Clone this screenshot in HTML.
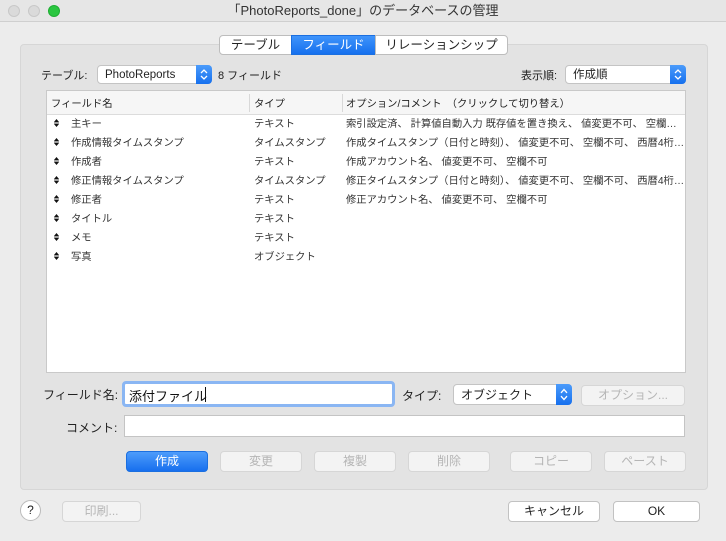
<!DOCTYPE html>
<html><head><meta charset="utf-8"><style>
*{margin:0;padding:0;box-sizing:border-box}
body{width:726px;height:541px;background:#ececec;font-family:"Liberation Sans","Noto Sans CJK JP",sans-serif;font-size:11px;color:#222;position:relative;overflow:hidden}
.a{position:absolute}
.title{left:0;top:0;width:726px;height:22px;background:#e6e6e6;border-bottom:1px solid #cfcfcf;text-align:center;line-height:22px;font-size:13px;color:#333}
.dot{width:12px;height:12px;border-radius:50%;top:5px;background:#dadada;border:1px solid #c8c8c8}
.group{left:20px;top:44px;width:688px;height:446px;background:#e3e3e3;border:1px solid #d6d6d6;border-radius:4px}
.seg{top:35px;height:20px;background:#fff;border:1px solid #bdbdbd;text-align:center;line-height:18px;font-size:12.5px;color:#222}
.pop{height:19px;background:#fff;border:1px solid #c4c4c4;border-radius:4px;line-height:19px;padding-left:7px;font-size:11.5px}
.pop span{position:absolute;top:1px;left:7px;line-height:16px}
.pop .ar{position:absolute;right:-1px;top:-1px;width:16px;height:19px;background:linear-gradient(#4b9bfb,#1670ee);border-radius:0 4px 4px 0}
.tbl{left:46px;top:90px;width:640px;height:283px;background:#fff;border:1px solid #c9c9c9;overflow:hidden}
.hdr{left:0;top:0;width:638px;height:24px;background:#f6f6f6;border-bottom:1px solid #dcdcdc}
.row{position:relative;height:19px;line-height:19px;font-size:10.3px;white-space:nowrap;color:#333}
.row .ic{position:absolute;left:7px;top:4px;width:5px;height:8px}
.btn{height:21px;background:#f3f3f3;border:1px solid #d6d6d6;border-radius:4px;text-align:center;line-height:19px;color:#b5b5b5;font-size:12px}
.wbtn{background:#fff;border:1px solid #c2c2c2;color:#222}
.lbl{font-size:12px;color:#222}
</style></head><body>
<svg width="0" height="0" style="position:absolute"><defs><symbol id="ud" viewBox="0 0 5 8"><path d="M0 3L2.5 0L5 3ZM0 5L2.5 8L5 5Z" fill="#111"/><rect x="0" y="3.6" width="5" height="0.8" fill="#111"/></symbol><symbol id="ar" viewBox="0 0 16 19"><path d="M5 8L8 5L11 8M5 11L8 14L11 11" stroke="#fff" stroke-width="1.3" fill="none"/></symbol></defs></svg>
<div class="a title">「PhotoReports_done」のデータベースの管理</div>
<div class="a dot" style="left:8px"></div>
<div class="a dot" style="left:28px"></div>
<div class="a dot" style="left:48px;background:#2ac640;border-color:#1fae33"></div>
<div class="a group"></div>
<div class="a seg" style="left:219px;width:73px;border-radius:4px 0 0 4px">テーブル</div>
<div class="a seg" style="left:291px;width:85px;background:linear-gradient(#3f94fb,#1670ee);color:#fff;border-color:#1b6fe0">フィールド</div>
<div class="a seg" style="left:375px;width:133px;border-radius:0 4px 4px 0">リレーションシップ</div>

<div class="a lbl" style="left:41px;top:67px;font-size:11px">テーブル:</div>
<div class="a pop" style="left:97px;top:65px;width:115px"><span>PhotoReports</span><svg class="ar" viewBox="0 0 16 19"><use href="#ar"/></svg></div>
<div class="a" style="left:218px;top:67px;font-size:11px">8 フィールド</div>
<div class="a" style="left:521px;top:67px;font-size:11px">表示順:</div>
<div class="a pop" style="left:565px;top:65px;width:121px"><span>作成順</span><svg class="ar" viewBox="0 0 16 19"><use href="#ar"/></svg></div>

<div class="a tbl">
<div class="a hdr"></div>
<div class="a" style="left:4px;top:4px;font-size:10.3px">フィールド名</div>
<div class="a" style="left:202px;top:3px;width:1px;height:18px;background:#d8d8d8"></div>
<div class="a" style="left:207px;top:4px;font-size:10.3px">タイプ</div>
<div class="a" style="left:295px;top:3px;width:1px;height:18px;background:#d8d8d8"></div>
<div class="a" style="left:299px;top:4px;font-size:10.3px">オプション/コメント　（クリックして切り替え）</div>
<div class="a" style="left:0;top:24px;width:638px">
<div class="row"><svg class="ic"><use href="#ud"/></svg><span class="a" style="left:24px">主キー</span><span class="a" style="left:207px">テキスト</span><span class="a" style="left:299px">索引設定済、 計算値自動入力 既存値を置き換え、 値変更不可、 空欄…</span></div>
<div class="row"><svg class="ic"><use href="#ud"/></svg><span class="a" style="left:24px">作成情報タイムスタンプ</span><span class="a" style="left:207px">タイムスタンプ</span><span class="a" style="left:299px">作成タイムスタンプ（日付と時刻）、 値変更不可、 空欄不可、 西暦4桁…</span></div>
<div class="row"><svg class="ic"><use href="#ud"/></svg><span class="a" style="left:24px">作成者</span><span class="a" style="left:207px">テキスト</span><span class="a" style="left:299px">作成アカウント名、 値変更不可、 空欄不可</span></div>
<div class="row"><svg class="ic"><use href="#ud"/></svg><span class="a" style="left:24px">修正情報タイムスタンプ</span><span class="a" style="left:207px">タイムスタンプ</span><span class="a" style="left:299px">修正タイムスタンプ（日付と時刻）、 値変更不可、 空欄不可、 西暦4桁…</span></div>
<div class="row"><svg class="ic"><use href="#ud"/></svg><span class="a" style="left:24px">修正者</span><span class="a" style="left:207px">テキスト</span><span class="a" style="left:299px">修正アカウント名、 値変更不可、 空欄不可</span></div>
<div class="row"><svg class="ic"><use href="#ud"/></svg><span class="a" style="left:24px">タイトル</span><span class="a" style="left:207px">テキスト</span></div>
<div class="row"><svg class="ic"><use href="#ud"/></svg><span class="a" style="left:24px">メモ</span><span class="a" style="left:207px">テキスト</span></div>
<div class="row"><svg class="ic"><use href="#ud"/></svg><span class="a" style="left:24px">写真</span><span class="a" style="left:207px">オブジェクト</span></div>
</div>
</div>

<div class="a lbl" style="left:43px;top:386px">フィールド名:</div>
<div class="a" style="left:122px;top:381px;width:273px;height:26px;border:3px solid #8ab6f3;border-radius:4px;background:#fff"><span style="position:absolute;left:4px;top:2px;font-size:13px;color:#111">添付ファイル</span><span style="position:absolute;left:80px;top:3px;width:1px;height:15px;background:#111"></span></div>
<div class="a lbl" style="left:402px;top:387px">タイプ:</div>
<div class="a pop" style="left:453px;top:384px;width:119px;height:21px;font-size:12px"><span style="top:2px">オブジェクト</span><svg class="ar" style="height:21px" viewBox="0 0 16 19" preserveAspectRatio="none"><use href="#ar"/></svg></div>
<div class="a btn" style="left:581px;top:385px;width:104px">オプション...</div>

<div class="a lbl" style="left:66px;top:419px">コメント:</div>
<div class="a" style="left:124px;top:415px;width:561px;height:22px;background:#fff;border:1px solid #c4c4c4"></div>

<div class="a btn" style="left:126px;top:451px;width:82px;background:linear-gradient(#4d9cfb,#176fee);border-color:#1b6fe0;color:#fff">作成</div>
<div class="a btn" style="left:220px;top:451px;width:82px">変更</div>
<div class="a btn" style="left:314px;top:451px;width:82px">複製</div>
<div class="a btn" style="left:408px;top:451px;width:82px">削除</div>
<div class="a btn" style="left:510px;top:451px;width:82px">コピー</div>
<div class="a btn" style="left:604px;top:451px;width:82px">ペースト</div>

<div class="a" style="left:20px;top:500px;width:21px;height:21px;border-radius:50%;background:#fff;border:1px solid #bbb;text-align:center;line-height:19px;font-size:12px">?</div>
<div class="a btn" style="left:62px;top:501px;width:79px">印刷...</div>
<div class="a btn wbtn" style="left:508px;top:501px;width:92px">キャンセル</div>
<div class="a btn wbtn" style="left:613px;top:501px;width:87px">OK</div>
</body></html>
